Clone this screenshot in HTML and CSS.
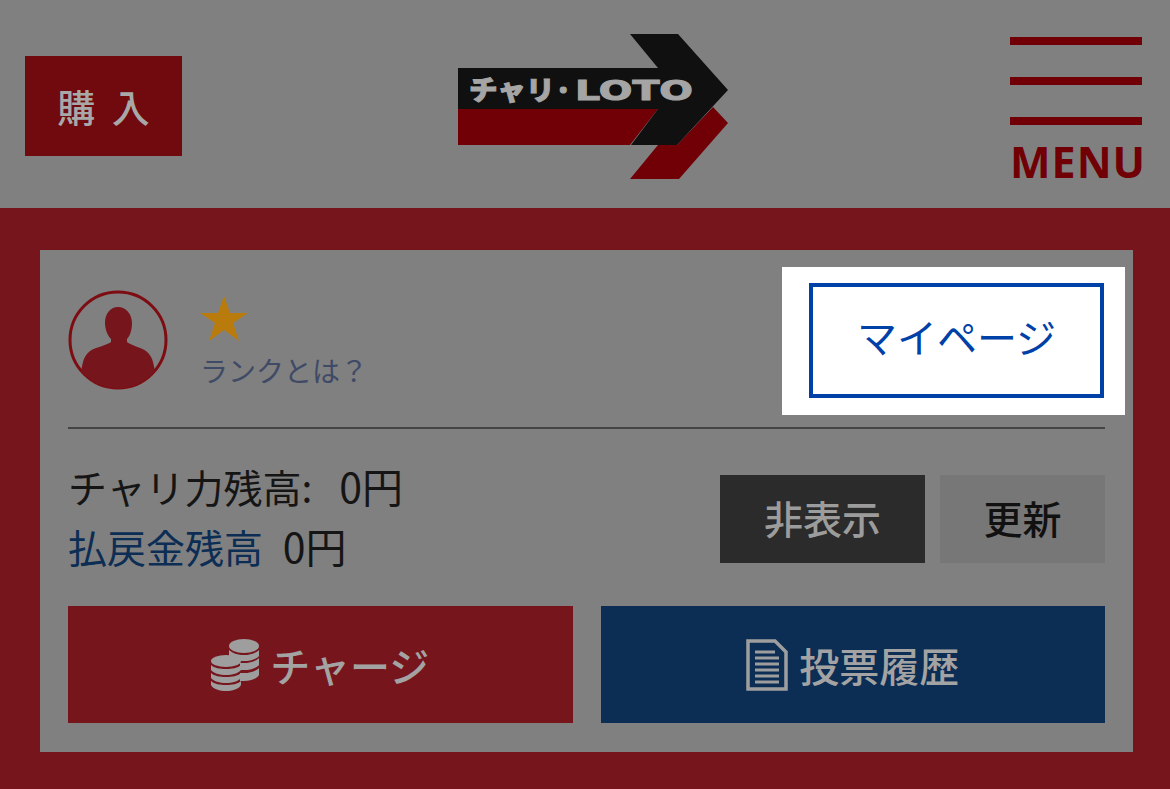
FILE: index.html
```html
<!DOCTYPE html>
<html lang="ja">
<head>
    <meta charset="UTF-8">
    <meta name="viewport" content="width=device-width, initial-scale=1.0">
    <title>チャリ・LOTO</title>
    <link rel="stylesheet" href="styles.css">
</head>
<body>

<!-- Header -->
<header class="header">
    <a class="buy-button">購 入</a>
    <svg class="logo" width="270" height="146" viewBox="0 0 270 146">
        <polygon points="0,75 200,75 172,111 0,111" fill="#700006"/>
        <polygon points="255,73 270,89 221,145 172,145 200,111 219,111" fill="#700006"/>
        <polygon points="0,34 200,34 172,0 220,0 270,56 219,111 173,111 200,75 0,75" fill="#111010"/>
        <text class="logo-text" x="11" y="66" textLength="103" lengthAdjust="spacingAndGlyphs">チャリ·</text>
        <text class="logo-text logo-latin" x="117" y="66" textLength="118" lengthAdjust="spacingAndGlyphs">LOTO</text>
    </svg>
    <div class="menu">
        <span class="menu-bar"></span>
        <span class="menu-bar"></span>
        <span class="menu-bar"></span>
        <span class="menu-label">MENU</span>
    </div>
</header>

<main class="main">
    <section class="card">
        <!-- Rank and my page -->
        <div class="user-row">
            <svg class="avatar" width="100" height="100" viewBox="0 0 100 100">
                <circle cx="50" cy="50" r="48" fill="none" stroke="#7d0d12" stroke-width="3"/>
                <path d="M50 17c-8 0-13 7-13 16 0 7 3 13 6 16v3c-3 3-15 5-21 9-4 3-6 7-7 11l-2 9A48 48 0 0 0 87 81l-2-9c-1-4-3-8-7-11-6-4-16-6-19-9v-3c3-3 5-9 5-16 0-9-6-16-14-16z" fill="#77151c"/>
            </svg>
            <div class="rank">
                <svg class="star" width="48" height="46" viewBox="0 0 48 46">
                    <polygon points="24,0 30,17 48,17 33,27 39,45 24,34 9,45 15,27 0,17 18,17" fill="#b97c0c"/>
                </svg>
                <span class="rank-link">ランクとは？</span>
            </div>
            <div class="mypage-highlight">
                <a class="mypage-button">マイページ</a>
            </div>
        </div>

        <hr class="divider">

        <!-- Balance -->
        <div class="balance-row">
            <div class="balance">
                <p class="balance-line balance-charge">チャリ力残高: <span class="amount">0円</span></p>
                <p class="balance-line"><span class="refund">払戻金残高</span> <span class="amount">0円</span></p>
            </div>
            <a class="small-button hide-button">非表示</a>
            <a class="small-button update-button">更新</a>
        </div>

        <!-- Actions -->
        <div class="action-row">
            <a class="action-button charge">
                <svg width="48" height="52" viewBox="0 0 48 52">
                    <g fill="#9e9e9e">
                        <ellipse cx="33" cy="7" rx="15" ry="7"/>
                        <path d="M18 11c3 3 9 5 15 5s12-2 15-5v6c-2 3-9 5-15 5s-13-2-15-5z"/>
                        <path d="M29 24h4c6 0 12-2 15-5v7c-2 3-9 5-15 5h-4z"/>
                        <path d="M29 34h4c6 0 12-2 15-5v7c-2 4-9 6-15 6h-4z"/>
                        <ellipse cx="15" cy="22" rx="15" ry="6"/>
                        <path d="M0 26c3 3 9 4 15 4s12-1 15-4v5c-2 3-9 5-15 5S2 34 0 31z"/>
                        <path d="M0 34c3 3 9 4 15 4s12-1 15-4v5c-2 3-9 5-15 5S2 42 0 39z"/>
                        <path d="M0 42c3 3 9 4 15 4s12-1 15-4v4c-2 4-9 6-15 6S2 50 0 46z"/>
                    </g>
                </svg>
                チャージ
            </a>
            <a class="action-button history">
                <svg width="42" height="52" viewBox="0 0 42 52">
                    <path d="M2 2h27l11 11v37H2z" fill="none" stroke="#9e9e9e" stroke-width="3.500"/>
                    <path d="M9 13h20M9 19h24M9 25h24M9 31h24M9 37h24M9 43h24" stroke="#9e9e9e" stroke-width="3"/>
                </svg>
                投票履歴
            </a>
        </div>
    </section>
</main>

</body>
</html>
```

FILE: styles.css
```css
body {
    margin: 0;
    font-family: "Noto Sans CJK JP", "Noto Sans", sans-serif;
    background-color: #77151c;
}
.header {
    display: flex;
    align-items: flex-start;
    height: 208px;
    padding-left: 25px;
    background-color: #808080;
}
.buy-button {
    width: 157px;
    height: 100px;
    margin-top: 56px;
    background-color: #700a0e;
    color: #a8a8a8;
    font-size: 38px;
    font-weight: 500;
    line-height: 100px;
    text-align: center;
    word-spacing: 8px;
}
.logo {
    margin-top: 34px;
    margin-left: 276px;
}
.logo-text {
    font-size: 27px;
    font-weight: 900;
    fill: #a5a5a5;
    stroke: #a5a5a5;
    stroke-width: 1px;
}
.logo-latin {
    font-family: "DejaVu Sans", sans-serif;
    font-weight: 700;
}
.menu {
    display: flex;
    flex-direction: column;
    width: 135px;
    margin-top: 37px;
    margin-left: 282px;
}
.menu-bar {
    width: 132px;
    height: 8px;
    margin-bottom: 32px;
    background-color: #700006;
}
.menu-label {
    margin-top: -21px;
    font-family: "Noto Sans", sans-serif;
    font-size: 43px;
    font-weight: 700;
    letter-spacing: 1px;
    line-height: 52px;
    color: #700006;
}
.main {
    padding: 42px 37px 37px 40px;
}
.card {
    height: 502px;
    padding: 17px 28px 0;
    box-sizing: border-box;
    background-color: #808080;
}
.user-row {
    display: flex;
    align-items: flex-start;
}
.avatar {
    margin-top: 23px;
}
.rank {
    display: flex;
    flex-direction: column;
    margin-top: 29px;
    margin-left: 32px;
}
.rank-link {
    margin-top: 8px;
    font-size: 28px;
    line-height: 40px;
    color: #3f4a66;
}
.mypage-highlight {
    margin-left: auto;
    margin-right: -20px;
    padding: 16px 21px 17px 27px;
    background-color: #fff;
}
.mypage-button {
    display: block;
    width: 295px;
    height: 115px;
    box-sizing: border-box;
    border: 4px solid #0041a8;
    color: #0041a8;
    font-size: 40px;
    line-height: 99px;
    text-align: center;
}
.divider {
    height: 2px;
    margin: 12px 0 0;
    border: none;
    background-color: #444;
}
.balance-row {
    display: flex;
    align-items: flex-start;
    height: 88px;
    margin-top: 46px;
}
.balance {
    flex: 1;
    margin-top: -19px;
}
.balance-line {
    margin: 0;
    font-size: 39px;
    line-height: 59px;
    word-spacing: 11px;
    color: #151515;
}
.balance-charge {
    word-spacing: 18px;
}
.amount {
    font-size: 41px;
}
.refund {
    color: #0c2d54;
}
.small-button {
    height: 88px;
    font-size: 39px;
    font-weight: 500;
    line-height: 84px;
    text-align: center;
}
.hide-button {
    width: 205px;
    background-color: #2b2b2b;
    color: #9c9c9c;
}
.update-button {
    width: 165px;
    margin-left: 15px;
    background-color: #777;
    color: #111;
}
.action-row {
    display: flex;
    gap: 28px;
    margin-top: 43px;
}
.action-button {
    display: flex;
    flex: 1;
    align-items: center;
    justify-content: center;
    gap: 11px;
    height: 117px;
    color: #a3a3a3;
    font-size: 40px;
    font-weight: 500;
}
.charge {
    background-color: #77151c;
}
.history {
    background-color: #0c2d54;
}
```
